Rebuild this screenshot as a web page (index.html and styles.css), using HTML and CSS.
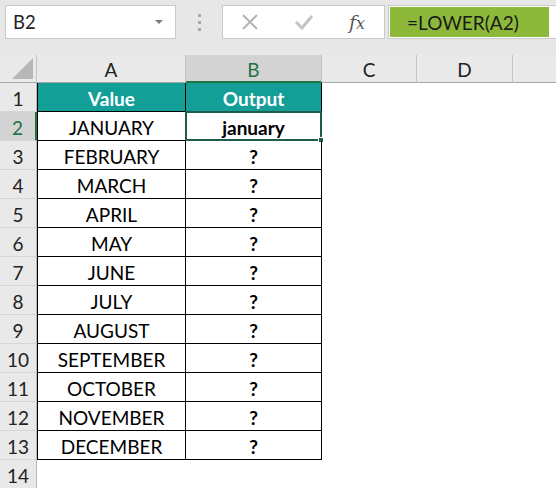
FILE: index.html
```html
<!DOCTYPE html>
<html>
<head>
<meta charset="utf-8">
<link rel="stylesheet" href="styles.css">
</head>
<body>
<div class="app">
  <div class="toolbar">
    <div class="namebox">
      <span class="ref">B2</span>
      <span class="caret"></span>
    </div>
    <div class="grip"><i></i><i></i><i></i></div>
    <div class="fbuttons">
      <svg class="ico" width="20" height="20" viewBox="0 0 20 20"><path d="M3 3 L17 17 M17 3 L3 17" stroke="#b4b4b4" stroke-width="2" fill="none"/></svg>
      <svg class="ico" width="20" height="20" viewBox="0 0 20 20"><path d="M2 10 L8 16 L18 4" stroke="#c4c4c4" stroke-width="3" fill="none"/></svg>
      <span class="fx">f<span class="x">x</span></span>
    </div>
    <div class="formula"><span class="hl">=LOWER(A2)</span></div>
  </div>
  <div class="sheet">
    <div class="corner"><span class="tri"></span></div>
    <div class="ch">A</div>
    <div class="ch sel">B</div>
    <div class="ch">C</div>
    <div class="ch">D</div>
    <div class="ch last"></div>

    <div class="rh">1</div>
    <div class="c a head">Value</div>
    <div class="c b head">Output</div>
    <div class="e"></div><div class="e"></div><div class="e"></div>

    <div class="rh sel">2</div>
    <div class="c a">JANUARY</div>
    <div class="c b bold active">january<span class="handle"></span></div>
    <div class="e"></div><div class="e"></div><div class="e"></div>

    <div class="rh">3</div>
    <div class="c a">FEBRUARY</div>
    <div class="c b bold">?</div>
    <div class="e"></div><div class="e"></div><div class="e"></div>

    <div class="rh">4</div>
    <div class="c a">MARCH</div>
    <div class="c b bold">?</div>
    <div class="e"></div><div class="e"></div><div class="e"></div>

    <div class="rh">5</div>
    <div class="c a">APRIL</div>
    <div class="c b bold">?</div>
    <div class="e"></div><div class="e"></div><div class="e"></div>

    <div class="rh">6</div>
    <div class="c a">MAY</div>
    <div class="c b bold">?</div>
    <div class="e"></div><div class="e"></div><div class="e"></div>

    <div class="rh">7</div>
    <div class="c a">JUNE</div>
    <div class="c b bold">?</div>
    <div class="e"></div><div class="e"></div><div class="e"></div>

    <div class="rh">8</div>
    <div class="c a">JULY</div>
    <div class="c b bold">?</div>
    <div class="e"></div><div class="e"></div><div class="e"></div>

    <div class="rh">9</div>
    <div class="c a">AUGUST</div>
    <div class="c b bold">?</div>
    <div class="e"></div><div class="e"></div><div class="e"></div>

    <div class="rh">10</div>
    <div class="c a">SEPTEMBER</div>
    <div class="c b bold">?</div>
    <div class="e"></div><div class="e"></div><div class="e"></div>

    <div class="rh">11</div>
    <div class="c a">OCTOBER</div>
    <div class="c b bold">?</div>
    <div class="e"></div><div class="e"></div><div class="e"></div>

    <div class="rh">12</div>
    <div class="c a">NOVEMBER</div>
    <div class="c b bold">?</div>
    <div class="e"></div><div class="e"></div><div class="e"></div>

    <div class="rh">13</div>
    <div class="c a">DECEMBER</div>
    <div class="c b bold">?</div>
    <div class="e"></div><div class="e"></div><div class="e"></div>

    <div class="rh">14</div>
    <div class="e"></div><div class="e"></div><div class="e"></div><div class="e"></div><div class="e"></div>
  </div>
</div>
</body>
</html>
```
FILE: styles.css
```css
* { box-sizing: border-box; }
html, body { margin: 0; padding: 0; }
body {
  width: 556px;
  height: 488px;
  overflow: hidden;
  background: #ffffff;
  font-family: Lato, "Open Sans", sans-serif;
  color: #000;
}
.app { width: 556px; }

.toolbar {
  height: 55px;
  background: #e7e7e7;
  display: flex;
  align-items: flex-start;
  padding-top: 5px;
  padding-left: 5px;
}
.namebox {
  width: 171px;
  height: 34px;
  background: #fff;
  border: 1px solid #c9c9c9;
  display: flex;
  align-items: center;
  justify-content: space-between;
  padding: 0 12px 0 7px;
}
.ref { font-size: 18.5px; color: #222; }
.caret {
  width: 0; height: 0;
  border-left: 4px solid transparent;
  border-right: 4px solid transparent;
  border-top: 4px solid #7a7a7a;
}
.grip {
  width: 46px;
  height: 34px;
  display: flex;
  flex-direction: column;
  align-items: center;
  justify-content: center;
  gap: 4px;
}
.grip i { display: block; width: 3px; height: 3px; background: #a8a8a8; }
.fbuttons {
  width: 163px;
  height: 34px;
  background: #fff;
  border: 1px solid #c9c9c9;
  display: flex;
  align-items: center;
  padding-left: 17px;
  gap: 34px;
}
.fx {
  font-family: "DejaVu Serif", "Liberation Serif", serif;
  font-style: italic;
  font-size: 19px;
  color: #5a5a5a;
  margin-left: 1px;
}
.fx .x { font-size: 16px; }
.formula {
  flex: 1;
  height: 34px;
  margin-left: 3px;
  background: #fff;
  border: 1px solid #c9c9c9;
  border-right: none;
  padding: 1px 7px 1px 1px;
  display: flex;
}
.hl {
  flex: 1;
  background: #8db93a;
  color: #1a1a1a;
  font-size: 19px;
  line-height: 32px;
  padding-left: 17px;
}

.sheet {
  display: grid;
  grid-template-columns: 37px 149px 136px 95px 96px 43px;
  grid-template-rows: 28px repeat(14, 29px);
  font-size: 19px;
}
.corner {
  background: #e9e9e9;
  border-right: 1px solid #c4c4c4;
  border-bottom: 1px solid #a6a6a6;
  position: relative;
}
.tri {
  position: absolute;
  right: 3px;
  bottom: 3px;
  width: 0; height: 0;
  border-left: 21px solid transparent;
  border-bottom: 21px solid #b7b7b7;
}
.ch {
  background: #e9e9e9;
  border-right: 1px solid #c6c6c6;
  border-bottom: 1px solid #a6a6a6;
  display: flex;
  align-items: flex-end;
  justify-content: center;
  padding-bottom: 1px;
  color: #222;
}
.ch.last { border-right: none; }
.ch.sel {
  background: #d3d3d3;
  color: #217346;
  border-bottom: 2px solid #217346;
  padding-bottom: 0;
}
.rh {
  background: #e9e9e9;
  border-right: 1px solid #b9b9b9;
  border-bottom: 1px solid #d6d6d6;
  display: flex;
  align-items: center;
  justify-content: center;
  padding-top: 3px;
  color: #222;
}
.rh.sel {
  background: #d3d3d3;
  color: #217346;
  border-right: 2px solid #217346;
}
.c {
  display: flex;
  align-items: center;
  justify-content: center;
  padding-top: 3px;
  border-right: 1px solid #000;
  border-bottom: 1px solid #000;
  position: relative;
}
.c.a { border-left: 1px solid #000; }
.c.head {
  background: #139e98;
  color: #fff;
  font-weight: 700;
}
.bold { font-weight: 700; }
.active {
  border: 2px solid #1f5c4c;
  margin-top: -1px;
  margin-left: -1px;
}
.handle {
  position: absolute;
  right: -4px;
  bottom: -4px;
  width: 6px;
  height: 6px;
  background: #1f5c4c;
  border: 1px solid #fff;
}
.e { background: #fff; }
```
